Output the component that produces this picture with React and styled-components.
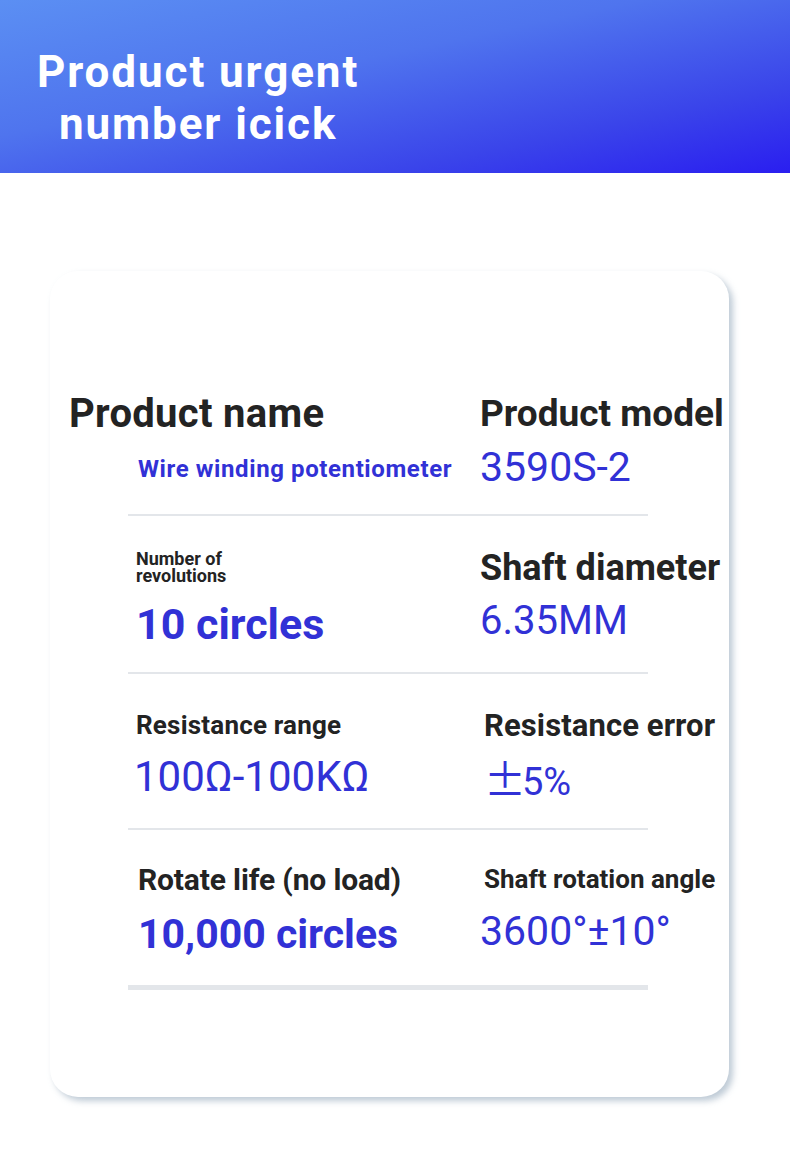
import React from "react";
import styled, { createGlobalStyle } from "styled-components";

const GlobalStyle = createGlobalStyle`
  html, body {
    margin: 0;
    padding: 0;
    background: #ffffff;
  }
  body {
    font-family: Roboto, "Liberation Sans", sans-serif;
  }
`;

const specs = [
  {
    height: 243,
    left: {
      indent: 19, top: 121,
      label: "Product name", labelSize: 40, labelLine: 44, labelSpacing: 0.3,
      value: "Wire winding potentiometer", valueShift: 69, valueSize: 24, valueLine: 30, valueSpacing: 0.6, valueBold: true, gap: 18,
    },
    right: {
      indent: 0, top: 121,
      label: "Product model", labelSize: 37, labelLine: 44, labelSpacing: 0,
      value: "3590S-2", valueSize: 41, valueLine: 44, gap: 9,
    },
  },
  {
    height: 156,
    left: {
      indent: 86, top: 34,
      label: "Number of\nrevolutions", labelSize: 18, labelLine: 17, labelSpacing: 0,
      value: "10 circles", valueSize: 43, valueLine: 46, valueBold: true, gap: 17,
    },
    right: {
      indent: 0, top: 32,
      label: "Shaft diameter", labelSize: 36, labelLine: 40, labelSpacing: 0,
      value: "6.35MM", valueSize: 40, valueLine: 44, gap: 11,
    },
  },
  {
    height: 154,
    left: {
      indent: 86, top: 35,
      label: "Resistance range", labelSize: 26, labelLine: 32, labelSpacing: 0.2,
      value: "100Ω-100KΩ", valueSize: 42, valueLine: 46, gap: 13, valueShift: -2,
    },
    right: {
      indent: 4, top: 34,
      label: "Resistance error", labelSize: 31, labelLine: 36, labelSpacing: 0.1,
      value: "±5%", cjk: true, valueSize: 38, valueLine: 46, gap: 10,
    },
  },
  {
    height: 155,
    left: {
      indent: 88, top: 32,
      label: "Rotate life (no load)", labelSize: 30, labelLine: 36, labelSpacing: -0.15,
      value: "10,000 circles", valueSize: 41, valueLine: 46, valueBold: true, gap: 13,
    },
    right: {
      indent: 4, top: 33,
      label: "Shaft rotation angle", labelSize: 26, labelLine: 32, labelSpacing: 0,
      value: "3600°±10°", valueSize: 41, valueLine: 46, gap: 13, valueShift: -4,
    },
  },
];

const Cell = ({ spec }) => (
  <SpecCell indent={spec.indent} top={spec.top}>
    <Label size={spec.labelSize} line={spec.labelLine} spacing={spec.labelSpacing}>
      {spec.label}
    </Label>
    <Value
      size={spec.valueSize}
      line={spec.valueLine}
      bold={spec.valueBold}
      gap={spec.gap}
      shift={spec.valueShift || 0}
      spacing={spec.valueSpacing || 0}
    >
      {spec.cjk ? (
        <>
          <Cjk>±</Cjk>5%
        </>
      ) : (
        spec.value
      )}
    </Value>
  </SpecCell>
);

const App = () => {
  return (
    <>
      <GlobalStyle />
      <Page>
        <Header>
          <Title>
            <TitleLine>Product urgent</TitleLine>
            <TitleLine>number icick</TitleLine>
          </Title>
        </Header>
        <Card>
          {specs.map((row, i) => (
            <React.Fragment key={i}>
              <Row height={row.height}>
                <Cell spec={row.left} />
                <Cell spec={row.right} />
              </Row>
              <Divider thick={i === specs.length - 1} />
            </React.Fragment>
          ))}
        </Card>
      </Page>
    </>
  );
};

const Page = styled.div`
  width: 790px;
  min-height: 1166px;
  background: #ffffff;
  overflow: hidden;
`;

const Header = styled.header`
  height: 173px;
  box-sizing: border-box;
  padding: 46px 0 0 37px;
  background: linear-gradient(168deg, #5b8ff3 0%, #4f74ee 40%, #3a44ea 75%, #2a1ef0 100%);
`;

const Title = styled.h1`
  display: inline-flex;
  flex-direction: column;
  align-items: center;
  margin: 0;
  color: #ffffff;
  font-family: Roboto, "Liberation Sans", sans-serif;
  font-weight: 700;
  font-size: 44px;
  letter-spacing: 1.9px;
`;

const TitleLine = styled.span`
  display: block;
  height: 52px;
  line-height: 52px;
  white-space: nowrap;
`;

const Card = styled.section`
  margin: 98px 0 0 50px;
  width: 679px;
  height: 826px;
  box-sizing: border-box;
  background: #ffffff;
  border-radius: 28px;
  box-shadow: 4px 4px 6px rgba(170, 185, 200, 0.75);
`;

const Row = styled.div`
  display: grid;
  grid-template-columns: 430px 1fr;
  height: ${({ height }) => height}px;
`;

const SpecCell = styled.div`
  display: flex;
  flex-direction: column;
  align-items: flex-start;
  padding: ${({ top }) => top}px 0 0 ${({ indent }) => indent}px;
`;

const Label = styled.div`
  color: #232323;
  font-weight: 700;
  font-size: ${({ size }) => size}px;
  line-height: ${({ line }) => line}px;
  letter-spacing: ${({ spacing }) => spacing}px;
  white-space: pre-line;
`;

const Value = styled.div`
  margin: ${({ gap }) => gap}px 0 0 ${({ shift }) => shift}px;
  color: #3131d6;
  font-weight: ${({ bold }) => (bold ? 700 : 400)};
  font-size: ${({ size }) => size}px;
  line-height: ${({ line }) => line}px;
  letter-spacing: ${({ spacing }) => spacing}px;
  white-space: nowrap;
`;

const Cjk = styled.span`
  font-family: "Noto Sans CJK SC", sans-serif;
  font-size: 42px;
  margin-right: -4px;
`;

const Divider = styled.hr`
  margin: 0 0 0 78px;
  width: 520px;
  height: ${({ thick }) => (thick ? 5 : 2)}px;
  border: 0;
  background: #e3e6ea;
`;

export default App;
